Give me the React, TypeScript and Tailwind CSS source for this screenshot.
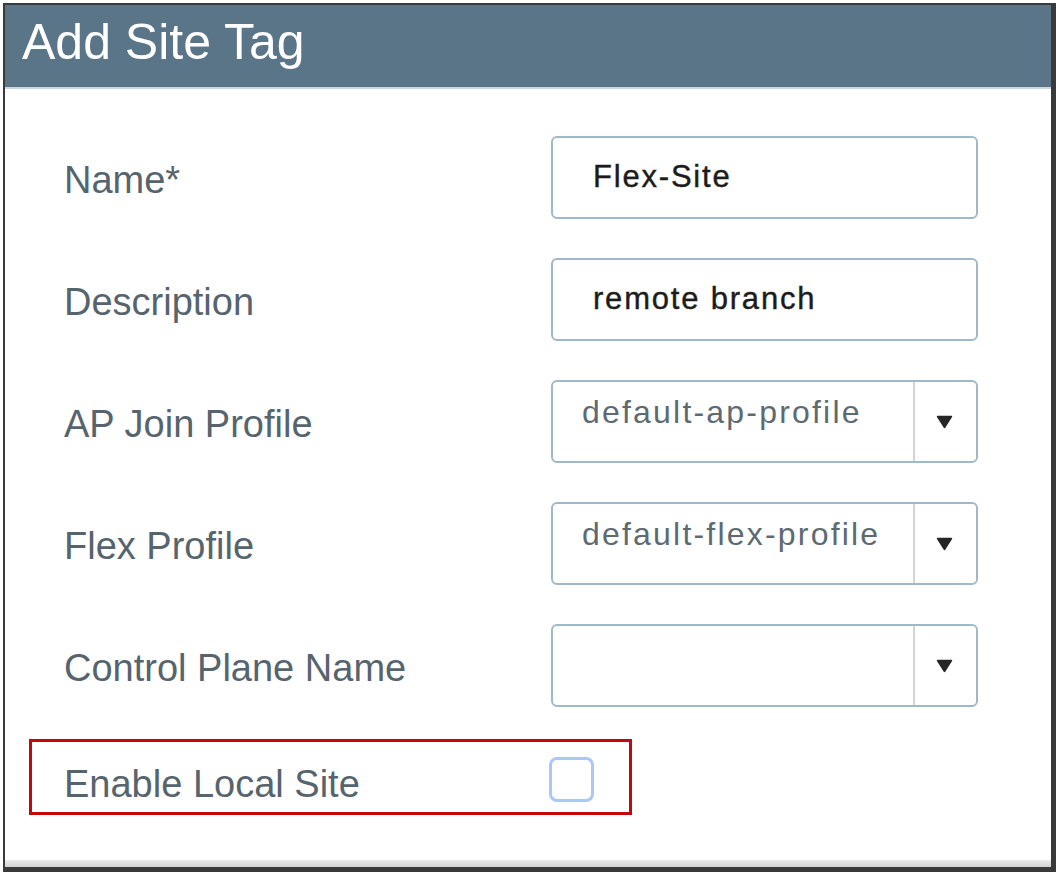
import React from "react";

const labelCls =
  "w-[487px] shrink-0 pt-[5px] text-[38px] leading-none text-[#56646e]";

function Caret() {
  return (
    <svg width="17" height="14" viewBox="0 0 17 14" aria-hidden="true">
      <path d="M1.5 1.5 H15.5 L8.5 12.5 Z" fill="#262626" stroke="#262626" strokeWidth="1.4" strokeLinejoin="round" />
    </svg>
  );
}

function TextField({ value }: { value: string }) {
  return (
    <div className="flex h-[83px] w-[427px] items-center rounded-[6px] border-2 border-[#a0b9c9] bg-white pl-[40px] pb-[3px]">
      <span className="text-[31px] leading-none tracking-[1.8px] text-[#1c1c1c] [-webkit-text-stroke:0.4px_#1c1c1c]">
        {value}
      </span>
    </div>
  );
}

function SelectField({ value }: { value?: string }) {
  return (
    <div className="flex h-[83px] w-[427px] overflow-hidden rounded-[6px] border-2 border-[#a0b9c9] bg-white">
      <div className="flex w-[360px] items-start pl-[29px] pt-[14px]">
        <span className="text-[32px] leading-none tracking-[2.2px] text-[#5e6a72]">{value}</span>
      </div>
      <div className="w-[2px] bg-[#d4d4d4]" />
      <div className="flex flex-1 items-center justify-center pr-[2px]">
        <Caret />
      </div>
    </div>
  );
}

function Row({ label, children }: { label: string; children: React.ReactNode }) {
  return (
    <div className="flex items-center pl-[35px]">
      <div className={labelCls}>{label}</div>
      {children}
    </div>
  );
}

export default function App() {
  return (
    <div
      className="h-[872px] w-[1056px] bg-white pl-[3px] pt-[3px]"
      style={{ fontFamily: '"Liberation Sans", Arial, sans-serif' }}
    >
      <div className="flex h-[869px] w-[1053px] flex-col border-b-[5px] border-l-2 border-r-[5px] border-t-2 border-[#3a3a3a] bg-white">
        {/* dialog title bar */}
        <div className="flex h-[82px] shrink-0 items-center bg-[#5a7488] pb-[9px] pl-[17px]">
          <h1 className="text-[50px] leading-none text-white">Add Site Tag</h1>
        </div>
        <div className="h-[2px] shrink-0 bg-[#c9d7e0]" />

        {/* form body */}
        <div className="flex flex-1 flex-col pl-[24px] pt-[47px]">
          <div className="flex flex-col gap-[39px]">
            <Row label="Name*">
              <TextField value="Flex-Site" />
            </Row>
            <Row label="Description">
              <TextField value="remote branch" />
            </Row>
            <Row label="AP Join Profile">
              <SelectField value="default-ap-profile" />
            </Row>
            <Row label="Flex Profile">
              <SelectField value="default-flex-profile" />
            </Row>
            <Row label="Control Plane Name">
              <SelectField />
            </Row>
          </div>

          <div className="mt-[32px] flex h-[76px] w-[603px] items-center border-[3px] border-[#c40808] pl-[32px]">
            <div className="w-[485px] shrink-0 pt-[14px] text-[38px] leading-none text-[#56646e]">
              Enable Local Site
            </div>
            <div className="mt-[4px] h-[45px] w-[45px] rounded-[8px] border-[3px] border-[#a9c7f8] bg-white" />
          </div>
        </div>

        {/* footer edge */}
        <div className="h-[7px] shrink-0 bg-gradient-to-b from-[#ececec] to-[#d2d2d2]" />
      </div>
    </div>
  );
}
